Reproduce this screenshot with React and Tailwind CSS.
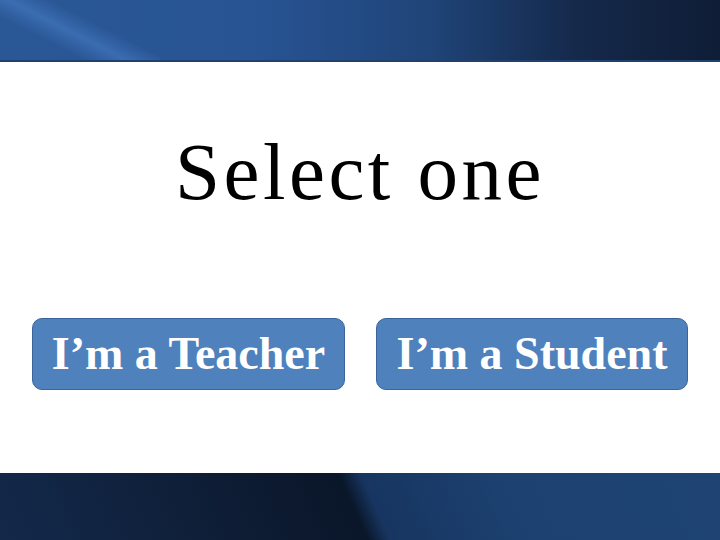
import React from 'react';

const App = () => {
    const btnClass = "h-[72px] flex items-center justify-center bg-[#4f81bd] border border-[#3b659a] rounded-[10px] text-white font-bold text-[46px] leading-none font-['Liberation_Serif',serif]";

    return (
        <div className="w-[720px] h-[540px] flex flex-col bg-white overflow-hidden">
            <div className="h-[62px] shrink-0 border-b-2 border-[#21406c] bg-[linear-gradient(27deg,transparent_10%,rgba(90,150,230,0.35)_15%,transparent_20%),linear-gradient(90deg,#2a5796_0%,#285494_35%,#1f4478_60%,#15294b_80%,#0f1d36_100%)]" />

            <div className="flex-1 flex flex-col items-center pt-[70px]">
                <h1 className="text-[81px] leading-none tracking-[3.5px] text-black font-['Liberation_Serif',serif] font-normal">
                    Select one
                </h1>
                <div className="flex gap-[31px] mt-[105px]">
                    <button className={`${btnClass} w-[313px]`}>I’m a Teacher</button>
                    <button className={`${btnClass} w-[312px]`}>I’m a Student</button>
                </div>
            </div>

            <div className="h-[67px] shrink-0 bg-[linear-gradient(66deg,#13294b_0%,#0e1d35_32%,#0a1629_49%,#173560_52%,#1d4272_72%,#1e4473_100%)]" />
        </div>
    );
};

export default App;
